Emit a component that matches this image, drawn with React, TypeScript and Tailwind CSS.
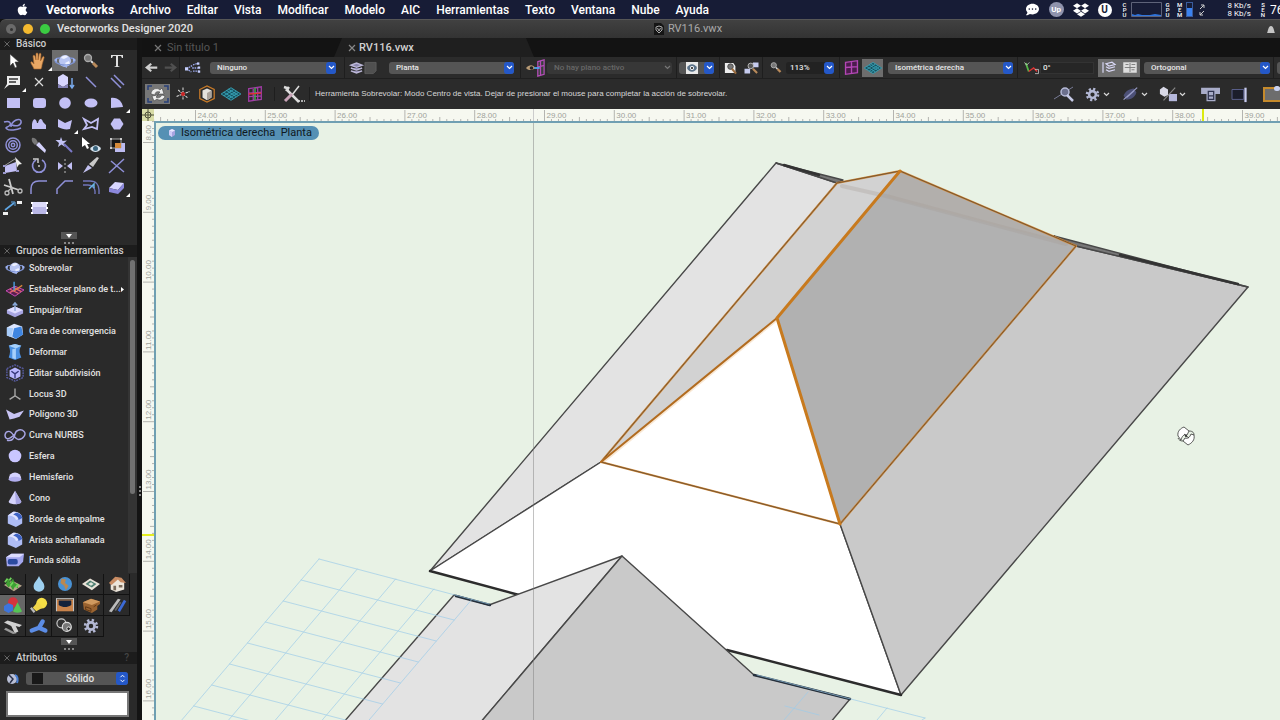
import { Fragment, ReactNode } from 'react';
import clsx from 'clsx';
import { FaApple, FaDropbox, FaCommentDots } from 'react-icons/fa';

const LILAC = '#c3c0f5';
const LINE = '#8f90d8';

interface IconProps {
	children: ReactNode;
	className?: string;
}

/** All the tool icons share the same 24x20 box */
function Icon({ children, className = 'w-6 h-5' }: IconProps) {
	return (
		<svg viewBox="0 0 24 20" className={clsx('block shrink-0', className)} fill="none" aria-hidden="true">
			{children}
		</svg>
	);
}

const flyover = (
	<>
		<circle cx="12" cy="10" r="6" fill="#b9c6f3" />
		<path d="M8 7c2-3 6-3 7-1l-4 2zM12 12l4-2 1 3-3 2z" fill="#eef1ff" />
		<path d="M7 7C2 7 1 10 4 12c4 3 12 3 16 0 3-2 2-5-3-5" stroke="#7e93d2" strokeWidth="1.500" />
		<path d="M1 9l3-2v4zM23 9l-3-2v4zM10 15l4-2v4z" fill="#9fb3ef" />
	</>
);
const hand = (
	<path
		d="M7 18c-1-3-4-6-3-7s2 1 3 2L6 5c0-1 1.600-1 2 0l1 4V3c0-1.500 2-1.500 2 0v6l1.200-6c.3-1.300 2-1 1.800.5L13.500 10l2-4c.6-1.200 2-.5 1.600.8L15 14c0 2-.6 3-1 4z"
		fill="#e9a865"
		stroke="#a8662c"
		strokeWidth=".6"
	/>
);
const magnifier = (
	<>
		<circle cx="9" cy="7" r="3.500" fill="#777" stroke="#aaa" strokeWidth="1.300" />
		<path d="M12 10l2 2" stroke="#ddd" strokeWidth="2" />
		<path d="M14 12l4 4" stroke="#b98a5a" strokeWidth="3" />
	</>
);
const cursorArrow = <path d="M9 3v12l3-3 2 5 2-1-2-5h4z" fill="#fff" stroke="#333" strokeWidth=".6" />;
const cube = (
	<>
		<path d="M6 5l6-3 6 3v9l-6 4-6-4z" fill="#a6a3e0" />
		<path d="M6 5l6-3 6 3-6 3z" fill="#e8e7ff" />
		<path d="M6 5l6 3v10l-6-4z" fill="#cfcdf8" />
	</>
);
const blueGrid = (
	<>
		<path d="M1 10l11-7 11 7-11 7z" fill="#17505f" stroke="#38a5b8" />
		<path d="M4 8l11 7M7 6l11 7M9 4.500l11 7M4 12l11-7M7 14l11-7M9 15.500l11-7" stroke="#38a5b8" />
	</>
);
const magentaGrid = (
	<path d="M5 4l14-2v14L5 18zM12 3v14M5 10l14-1" fill="#4b1c4c" stroke="#b347b5" strokeWidth="1.600" />
);
const gear = (
	<>
		<circle cx="12" cy="10" r="6.500" stroke="#b3b8d4" strokeWidth="3" strokeDasharray="2.550 2.550" />
		<circle cx="12" cy="10" r="4" stroke="#b3b8d4" strokeWidth="3" />
	</>
);
const roundedSolid = (
	<>
		<path d="M4 6l6-4c6 0 10 3 10 7v6l-7 4-9-4z" fill="#aebcf5" />
		<path d="M4 6l6-4c6 0 9 3 10 7l-7 2C12 7 8 6 4 6z" fill="#e0e3ff" />
		<path d="M10 5c4 1 6 4 6 6l4-2c0-3-3-6-7-6z" fill="#3e63c4" />
	</>
);

interface Tool {
	name: string;
	icon: ReactNode;
	more?: boolean;
	active?: boolean;
}

const basicTools: Tool[] = [
	{ name: 'Selección', icon: cursorArrow },
	{ name: 'Desplazar', icon: hand, more: true },
	{ name: 'Sobrevolar', icon: flyover, active: true },
	{ name: 'Zoom', icon: magnifier },
	{ name: 'Texto', icon: <path d="M6 7V4h12v3h-1l-1-2h-3v10l2 1H9l2-1V5H8L7 7z" fill="#e0e0e0" /> },
	{
		name: 'Llamada',
		more: true,
		icon: (
			<>
				<path d="M6 4h13v9H8l-5 4 3-5z" fill="#ededed" />
				<path d="M8 7h9M8 10h7" stroke="#333" strokeWidth="1.400" />
			</>
		),
	},
	{ name: 'Locus', icon: <path d="M8 6l8 8M16 6l-8 8" stroke="#ddd" strokeWidth="1.200" /> },
	{
		name: 'Bloque',
		icon: (
			<>
				<path d="M5 5l5-3 5 3v7l-5 3-5-3z" fill="#d8d6ff" />
				<path d="M5 12l5 3 5-3v4H5z" fill="#8582b8" />
				<path d="M19 6v9M17 13l2 3 2-3" stroke="#79a9ea" strokeWidth="1.500" />
			</>
		),
	},
	{ name: 'Línea', icon: <path d="M7 5l10 10" stroke={LINE} strokeWidth="1.500" /> },
	{ name: 'Línea doble', icon: <path d="M6 6l10 10M9 3l10 10" stroke={LINE} strokeWidth="1.500" /> },
	{ name: 'Rectángulo', icon: <path d="M6 5h13v10H6z" fill={LILAC} /> },
	{ name: 'Rectángulo redondeado', icon: <rect x="6" y="5" width="13" height="10" rx="3" fill={LILAC} /> },
	{ name: 'Círculo', icon: <circle cx="12" cy="10" r="5.800" fill={LILAC} /> },
	{ name: 'Elipse', icon: <ellipse cx="12" cy="10" rx="6.500" ry="4.500" fill={LILAC} /> },
	{ name: 'Arco', icon: <path d="M6 5c7-1 11 4 12 9l-12 1z" fill={LILAC} />, more: true },
	{
		name: 'Mano alzada',
		icon: <path d="M3 8c6-2 8 2 5 4s-4 1-2 3 10 1 14-1M10 13c0-6 9-10 10-6s-4 6-9 4" stroke={LINE} strokeWidth="1.500" />,
	},
	{ name: 'Bézier', icon: <path d="M5 15v-5c1-6 4-6 5-1h1c1-5 4-5 5-1l3 3v4z" fill={LILAC} /> },
	{ name: 'Polilínea', icon: <path d="M5 5l7 4 7-3-2 9c-4 1-8 0-12-2z" fill={LILAC} />, more: true },
	{ name: 'Polígono', icon: <path d="M5 5l7 4 7-4-1 10-5-2-8 2 3-4z" stroke={LILAC} strokeWidth="1.800" /> },
	{ name: 'Polígono regular', icon: <path d="M9 4.500h6l3.500 5.500-3.500 5.500H9L5.500 10z" fill={LILAC} /> },
	{
		name: 'Espiral',
		icon: (
			<>
				<circle cx="12" cy="10" r="7" stroke={LINE} strokeWidth="1.500" />
				<circle cx="12" cy="10" r="4.300" stroke={LINE} strokeWidth="1.500" />
				<circle cx="12" cy="10" r="1.700" stroke={LINE} strokeWidth="1.500" />
			</>
		),
	},
	{
		name: 'Cuentagotas',
		icon: (
			<>
				<path d="M5 3c3-1 5 2 6 5l-3 2C6 8 4 6 5 3z" fill="#777" />
				<path d="M9 10l3-3 7 8-1 3z" fill="#d4d2fb" />
			</>
		),
	},
	{
		name: 'Varita',
		icon: (
			<>
				<path d="M8 2l1.500 4 4.500-.5-3.500 3L12 12 8.500 9.500 5 12l1-4-3.500-3H7z" fill="#c3c3f5" />
				<path d="M11 9l8 8" stroke="#7c7ac9" strokeWidth="2" />
			</>
		),
	},
	{
		name: 'Visibilidad',
		icon: (
			<>
				<path d="M3 2v10l3-2 2 4 2-1-2-4h3z" fill="#fff" />
				<path d="M11 14c3-5 9-5 11 0-3 4-8 4-11 0z" fill="#d6e4ee" />
				<circle cx="16.500" cy="13.500" r="2.500" fill="#3b667f" />
			</>
		),
	},
	{
		name: 'Atributos',
		icon: (
			<>
				<path d="M10 8h10v9H10z" fill="#bdbbf0" />
				<path d="M6 4h10v9H6z" fill="#171717" stroke="#aaa" />
				<path d="M10 8h6v5h-6z" fill="#d58a39" />
				<path d="M5 3h2v2H5zM15 3h2v2h-2zM5 12h2v2H5z" fill="#ccc" />
			</>
		),
	},
	{
		name: 'Deformar 2D',
		icon: (
			<>
				<path d="M4 10l11-4 1 9-12 2z" fill={LILAC} />
				<path d="M3 10l11-7" stroke="#999" />
				<path d="M14 1l7 7-3 .5-2 3z" fill="#eee" />
				<path d="M2 9h3v2H2zM2 16h3v2H2zM15 14h3v2h-3z" fill="#9a98cc" />
			</>
		),
	},
	{
		name: 'Rotar',
		icon: (
			<>
				<path d="M9 4a6.500 6.500 0 1 0 6 0" stroke={LINE} strokeWidth="1.700" />
				<path d="M6 3h5v4M12 9v2" stroke="#ccc" strokeWidth="1.500" />
			</>
		),
	},
	{
		name: 'Simetría',
		icon: (
			<>
				<path d="M5 6l5 4-5 4zM19 6l-5 4 5 4z" fill={LILAC} />
				<path d="M12 3v14" stroke="#bbb" strokeDasharray="2 2" />
			</>
		),
	},
	{
		name: 'Dividir',
		icon: (
			<>
				<path d="M4 17l5-8 4 3z" fill="#c2c1f0" />
				<path d="M10 8l8-7 2 1-6 9z" fill="#c9c9c9" />
			</>
		),
	},
	{ name: 'Conectar', icon: <path d="M4 17L19 3M6 5l13 11" stroke={LINE} strokeWidth="1.500" /> },
	{
		name: 'Recortar',
		icon: (
			<>
				<path d="M3 8l15 5M8 2l4 15" stroke="#ccc" strokeWidth="1.800" />
				<circle cx="6" cy="16" r="2" stroke="#bbb" strokeWidth="1.300" />
				<circle cx="19" cy="14" r="2" stroke="#bbb" strokeWidth="1.300" />
				<path d="M7 14l5-4" stroke="#bbb" strokeWidth="1.500" />
			</>
		),
	},
	{ name: 'Empalme', icon: <path d="M4 17V12c0-5 2-8 8-8h8" stroke={LINE} strokeWidth="1.500" /> },
	{ name: 'Chaflán', icon: <path d="M4 17v-5l8-8h8" stroke={LINE} strokeWidth="1.500" /> },
	{
		name: 'Paralela',
		icon: (
			<>
				<path d="M4 4h7c6 0 9 4 9 9v4M4 8h5c4 0 7 3 7 6v3" stroke="#7176ba" strokeWidth="1.400" />
				<path d="M10 12l5-5v4" stroke="#6bb7e8" strokeWidth="1.400" />
			</>
		),
	},
	{
		name: 'Borrador',
		more: true,
		icon: (
			<>
				<path d="M4 11l6-6 9 1-6 7z" fill="#d9d7ff" />
				<path d="M4 11l9 2 6-7v5l-6 6-9-2z" fill="#8c88dc" />
			</>
		),
	},
	{
		name: 'Cota',
		icon: (
			<>
				<path d="M4 12l9-7" stroke="#5fa6e4" strokeWidth="1.600" />
				<path d="M2 14h5v3H2zM16 3h5v3h-5z" fill="#eee" />
				<path d="M10 4h4v4" stroke="#5fa6e4" />
			</>
		),
	},
	{
		name: 'Símbolo',
		icon: (
			<>
				<path d="M5 4h15v12H5z" fill="#b9b7e6" />
				<path d="M5 4h15v5H5z" fill="#dddcfa" />
				<path d="M4 4h2v2H4zM19 4h2v2h-2zM4 14h2v2H4zM19 14h2v2h-2zM4 9h2v2H4zM19 9h2v2h-2z" fill="#fff" />
			</>
		),
	},
];

const toolGroups: Tool[] = [
	{ name: 'Sobrevolar', icon: flyover },
	{
		name: 'Establecer plano de t...',
		more: true,
		icon: (
			<>
				<path d="M2 12l10-5 10 4-10 7z" fill="#58204e" stroke="#d04ec0" />
				<path d="M6 10l10 5M10 8l9 5M6 14l10-5" stroke="#e2646e" strokeWidth="1.500" />
				<path d="M11 12V2" stroke="#4ba3e8" strokeWidth="1.500" />
				<path d="M11 12l9-6" stroke="#d9863c" strokeWidth="1.500" />
			</>
		),
	},
	{
		name: 'Empujar/tirar',
		icon: (
			<>
				<path d="M3 10l9-4 9 4v4l-9 4-9-4z" fill="#a8a5e2" />
				<path d="M3 10l9-4 9 4-9 4z" fill="#dedcff" />
				<path d="M12 11V3M9.500 5L12 2l2.500 3" stroke="#89a8d8" strokeWidth="1.500" />
			</>
		),
	},
	{
		name: 'Cara de convergencia',
		icon: (
			<>
				<path d="M3 6l8-4 9 3 1 9-8 5-10-4z" fill="#dce6ff" />
				<path d="M11 7l8-2 2 9-8 5-4-3z" fill="#3f86e2" />
				<path d="M3 6l7 1-2 10-5-2z" fill="#a8ccfa" />
			</>
		),
	},
	{
		name: 'Deformar',
		icon: (
			<>
				<path d="M5 3l7-2 7 2c-3 5-2 8 0 13l-7 3-7-3c2-5 2-8 0-13z" fill="#4a90e2" />
				<path d="M5 3l7-2 7 2-6 3zM9 7l4-1v12l-4-1z" fill="#a6d0fb" />
			</>
		),
	},
	{
		name: 'Editar subdivisión',
		icon: (
			<>
				<path d="M3 5l9-4 9 4v10l-9 4-9-4z" stroke="#5b5fa8" strokeWidth="1.500" strokeDasharray="2 1" />
				<path d="M6 7l6-3 6 3v7l-6 3-6-3z" fill="#b9b7ff" />
				<path d="M8 8l4 3 4-3M12 11v5" stroke="#34357a" strokeWidth="1.500" />
			</>
		),
	},
	{ name: 'Locus 3D', icon: <path d="M12 4v8l-6 4M12 12l6 4" stroke="#aaa" strokeWidth="1.500" /> },
	{ name: 'Polígono 3D', icon: <path d="M2 5l9 5 11-4-5 7-6 2-5 1z" fill="#c8c4f4" /> },
	{
		name: 'Curva NURBS',
		icon: (
			<path
				d="M3 16c5 1 8-2 9-7s7-6 10-3-1 9-6 9-6-9-11-9-5 7-2 8 7-3 9-5"
				stroke="#a8a6e4"
				strokeWidth="1.600"
			/>
		),
	},
	{ name: 'Esfera', icon: <circle cx="12" cy="10" r="7" fill="#c9c6ff" /> },
	{
		name: 'Hemisferio',
		icon: (
			<>
				<path d="M5 12a7 7 0 0 1 14 0z" fill="#d4d2ff" />
				<ellipse cx="12" cy="12.500" rx="7" ry="2.800" fill="#b2afef" />
			</>
		),
	},
	{
		name: 'Cono',
		icon: (
			<>
				<path d="M12 2l7 12c0 4-14 4-14 0z" fill="#d5d3fb" />
				<path d="M12 2l7 12c0 2-3 3-6 3z" fill="#a7a4e2" />
			</>
		),
	},
	{ name: 'Borde de empalme', icon: roundedSolid },
	{ name: 'Arista achaflanada', icon: roundedSolid },
	{
		name: 'Funda sólida',
		icon: (
			<>
				<path d="M2 7l6-4h14l-1 9-5 5H3z" fill="#a4a7ef" />
				<path d="M2 7l6-4h14l-5 4z" fill="#dcdcff" />
				<rect x="4" y="9" width="11" height="6" rx="2" fill="#2b4aa0" />
			</>
		),
	},
];

const palettes: Tool[] = [
	{
		name: 'Paisaje',
		icon: (
			<>
				<path d="M2 11l9-5 11 6-9 6z" fill="#b8a58b" />
				<path d="M4 10l3-6 2 5 3-5 2 5 2 1 2 5-4-2-2 4-3-5-2 2z" fill="#3fa033" />
				<path d="M3 8l3-4M9 12l3-4M15 14l3-4M8 6l2-3" stroke="#6fd45a" strokeWidth="2" />
			</>
		),
	},
	{ name: 'Agua', icon: <path d="M12 1c2 5 6 7 6 12a6 5.500 0 0 1-12 0c0-5 4-7 6-12z" fill="#9ed0f0" /> },
	{
		name: 'SIG',
		icon: (
			<>
				<circle cx="12" cy="10" r="7.800" fill="#4a92d4" />
				<path d="M8 4l5 1-1 4 4 3-3 5-2-5-4-3z" fill="#b98851" />
			</>
		),
	},
	{
		name: 'Planos',
		icon: (
			<>
				<path d="M2 10l9-6 11 6-9 7z" fill="#e9e3d8" />
				<path d="M6 10l5-4 7 4-5 4z" fill="#4f7f72" />
				<path d="M9 10l3-2 3 2-3 2z" fill="#dfe6da" />
			</>
		),
	},
	{
		name: 'Edificio',
		icon: (
			<>
				<path d="M5 9l8-6 7 5v8l-9 3-6-3z" fill="#ece5da" />
				<path d="M3 9l7-7 7 1 5 6-6-1-3-3-7 6z" fill="#c98c63" />
				<path d="M8 12h3v5H8zM14 11h4v3h-4z" fill="#7a6a5a" />
			</>
		),
	},
	{
		name: 'Modelado 3D',
		active: true,
		icon: (
			<>
				<circle cx="12" cy="7" r="5.500" fill="#d3343e" />
				<path d="M2 11l5-3 5 2v6l-5 3-5-3z" fill="#3d75dd" />
				<path d="M17 7l5 10c-1 2-9 2-10 0z" fill="#55c455" />
			</>
		),
	},
	{
		name: 'Iluminación',
		icon: (
			<>
				<circle cx="15" cy="8" r="6" fill="#f6df45" />
				<path d="M11 6l5 7-7 4-4-4z" fill="#f0d64a" />
				<path d="M3 13l4 5" stroke="#bbb" strokeWidth="2.500" />
			</>
		),
	},
	{
		name: 'Escenario',
		icon: (
			<>
				<path d="M3 4h18v13H3z" fill="#c9834b" />
				<path d="M5 5h14v5c-5 3-9 3-14 0z" fill="#15223b" />
				<path d="M2 3h20M2.500 3v14M21.500 3v14" stroke="#ddd" />
			</>
		),
	},
	{
		name: 'Mobiliario',
		icon: (
			<>
				<path d="M3 7l9-4 10 3v3l-3 2v4l-6 4-9-4z" fill="#9a6330" />
				<path d="M3 7l9-4 10 3-9 4z" fill="#d19a5f" />
				<path d="M6 12l6 2v3l-6-2zM15 12l3-2" stroke="#5c3614" />
			</>
		),
	},
	{
		name: 'Máquinas',
		icon: (
			<>
				<path d="M3 17L13 3l3 1L6 18z" fill="#bcbcbc" />
				<path d="M14 17l7-12" stroke="#3c6ad6" strokeWidth="3" />
				<path d="M10 16l6-9" stroke="#666" strokeWidth="2" />
			</>
		),
	},
	{
		name: 'Estructura',
		icon: (
			<>
				<path d="M2 6l4-2 16 5-3 2-4-1 3 6-4 2-4-8z" fill="#d0d0d0" />
				<path d="M4 12l12 6-4 1L2 14z" fill="#9a9a9a" />
			</>
		),
	},
	{
		name: 'Tuberías',
		icon: <path d="M4 15l8-3 4-7M12 12l7 3" stroke="#5c8de6" strokeWidth="5" strokeLinecap="round" />,
	},
	{
		name: 'Fijaciones',
		icon: (
			<>
				<circle cx="8" cy="7" r="5" fill="#333" stroke="#ccc" strokeWidth="1.300" />
				<circle cx="14" cy="11" r="5" fill="#777" stroke="#ddd" strokeWidth="1.300" />
				<circle cx="16" cy="13" r="2" fill="#222" stroke="#eee" />
			</>
		),
	},
	{ name: 'Engranajes', icon: gear },
];

function Chevron({ className = 'w-[7px] h-[5px]' }: { className?: string }) {
	return (
		<svg viewBox="0 0 7 5" className={className} fill="none" aria-hidden="true">
			<path d="M1 1l2.500 2.500L6 1" stroke="currentColor" strokeWidth="1.200" />
		</svg>
	);
}

interface PopupProps {
	label: string;
	value: string;
	className?: string;
	disabled?: boolean;
}

/** Rounded pop-up menu with the blue arrow cap on its right */
function Popup({ label, value, className, disabled }: PopupProps) {
	return (
		<div className={clsx('relative flex h-[12px] shrink-0', className)}>
			<select
				aria-label={label}
				disabled={disabled}
				className={clsx(
					'w-full appearance-none rounded-[3px] pl-[7px] pr-3 text-[8px] leading-[12px] font-medium',
					disabled ? 'bg-[#373737] text-[#686868]' : 'bg-[#555] text-[#e6e6e6]'
				)}
			>
				<option>{value}</option>
			</select>
			<span
				className={clsx(
					'pointer-events-none absolute inset-y-0 right-0 flex w-[10px] items-center justify-center rounded-[3px]',
					disabled ? 'text-[#777]' : 'bg-[#2458c8] text-white'
				)}
			>
				<Chevron />
			</span>
		</div>
	);
}

function Divider({ className }: { className?: string }) {
	return <span className={clsx('w-px shrink-0 self-stretch bg-[#1e1e1e]', className)} />;
}

interface ToolButtonProps {
	label: string;
	children: ReactNode;
	className?: string;
	icon?: string;
}

function ToolButton({ label, children, className, icon = 'w-5 h-4' }: ToolButtonProps) {
	return (
		<button aria-label={label} className={clsx('flex shrink-0 items-center justify-center', className)}>
			<Icon className={icon}>{children}</Icon>
		</button>
	);
}

function PanelTitle({ children, help }: { children: ReactNode; help?: boolean }) {
	return (
		<h2 className="flex h-3 items-center bg-[#1c1c1c] pl-1 text-[10px] leading-3 font-medium text-[#ccc]">
			<button aria-label="Cerrar panel" className="w-3 text-left text-[#666]">
				<svg viewBox="0 0 6 6" className="h-[6px] w-[6px]" aria-hidden="true">
					<path d="M.5.5l5 5M5.500.5l-5 5" stroke="currentColor" />
				</svg>
			</button>
			{children}
			{help && <button aria-label="Ayuda" className="mr-2 ml-auto text-[#444]">?</button>}
		</h2>
	);
}

function Expander() {
	return (
		<div className="flex flex-col items-center">
			<button aria-label="Mostrar más" className="flex h-[7px] w-4 items-center justify-center bg-[#555]">
				<svg viewBox="0 0 6 4" className="h-1 w-[6px]" aria-hidden="true">
					<path d="M0 0h6L3 4z" fill="#fff" />
				</svg>
			</button>
			<span className="mt-[3px] flex gap-[2px]">
				<i className="h-[2px] w-[2px] bg-[#888]" />
				<i className="h-[2px] w-[2px] bg-[#888]" />
				<i className="h-[2px] w-[2px] bg-[#888]" />
			</span>
		</div>
	);
}

const menus = ['Archivo', 'Editar', 'Vista', 'Modificar', 'Modelo', 'AIC', 'Herramientas', 'Texto', 'Ventana', 'Nube', 'Ayuda'];

function Stacked({ text }: { text: string }) {
	return (
		<span className="flex w-[6px] flex-col items-center text-[6px] leading-[5px] font-medium">
			{text.split('').map((letter, i) => (
				<span key={i}>{letter}</span>
			))}
		</span>
	);
}

function MenuBar() {
	return (
		<header className="flex h-[19px] shrink-0 items-center overflow-hidden bg-[#171c36] pl-4 text-white">
			<FaApple className="mr-[17px] h-[13px] w-[13px]" />
			<nav className="flex items-center gap-4 text-[12px] leading-4 font-medium whitespace-nowrap">
				<a href="#vectorworks" className="font-bold">Vectorworks</a>
				{menus.map((menu) => (
					<a key={menu} href={`#${menu}`}>{menu}</a>
				))}
			</nav>
			<div className="ml-auto flex shrink-0 items-center">
				<FaCommentDots className="mr-[10px] h-[13px] w-[13px]" />
				<span className="mr-[9px] flex h-[15px] w-[15px] items-center justify-center rounded-full bg-[#8f93ad] text-[8px] font-bold">Up</span>
				<FaDropbox className="mr-[9px] h-4 w-4" />
				<span className="mr-[10px] flex h-[14px] w-[14px] items-center justify-center rounded-full bg-white text-[10px] font-bold text-[#171c36]">U</span>
				<Stacked text="CPU" />
				<svg viewBox="0 0 31 15" className="mx-[3px] h-[15px] w-[31px]" aria-hidden="true">
					<path d="M.5.5h30v14H.5z" fill="none" stroke="#5e6379" />
					<path d="M1 14v-2l3 1 3-1 4 1h8l5-1 6 1v1z" fill="#2f74dc" />
				</svg>
				<Stacked text="GPU" />
				<span className="w-[6px]" />
				<Stacked text="MEM" />
				<span className="mr-[6px] ml-[3px] flex h-[15px] w-[7px] items-end border border-[#3a5b9b]">
					<i className="h-[8px] w-full bg-[#3b82f0]" />
				</span>
				<svg viewBox="0 0 6 12" className="mr-[23px] h-3 w-[6px]" fill="none" stroke="#ccc" aria-hidden="true">
					<path d="M1 5l4-4M2 1h3v3M5 7l-4 4M1 8v3h3" />
				</svg>
				<span className="mr-[9px] flex flex-col text-[8px] leading-[8px]">
					<span>8 Kb/s</span>
					<span>8 Kb/s</span>
				</span>
				<Stacked text="SEN" />
				<span className="ml-1 w-[10px] overflow-hidden text-[12px] leading-4">76</span>
			</div>
		</header>
	);
}

function TitleBar() {
	return (
		<div className="flex h-[19px] shrink-0 items-center rounded-tl-md border-t border-[#565656] bg-linear-to-b from-[#414141] to-[#333] px-[6px] text-[11px] leading-4">
			<div className="flex flex-1 items-center">
				<button aria-label="Cerrar" className="mr-[7px] flex h-[10px] w-[10px] items-center justify-center rounded-full bg-[#6a6a6a]">
					<i className="h-[3px] w-[3px] rounded-full bg-[#333]" />
				</button>
				<button aria-label="Minimizar" className="mr-[7px] h-[10px] w-[10px] rounded-full bg-[#f4b92f]" />
				<button aria-label="Ampliar" className="mr-[7px] h-[10px] w-[10px] rounded-full bg-[#3bcb42]" />
				<span className="font-medium whitespace-nowrap text-[#e2e2e2]">Vectorworks Designer 2020</span>
			</div>
			<div className="flex items-center gap-[4px] pl-24 text-[#aaa]">
				<svg viewBox="0 0 10 12" className="h-3 w-[10px]" aria-hidden="true">
					<path d="M0 0h7l3 3v9H0z" fill="#151515" />
					<path d="M2 4l3-1 3 1v3L5 10 2 7zM3.500 5L5 8l1.500-3" fill="none" stroke="#aaa" />
				</svg>
				RV116.vwx
			</div>
			<div className="flex flex-1 justify-end">
				<svg viewBox="0 0 8 9" className="mr-[-1px] h-[9px] w-2" aria-label="Avisos">
					<path d="M0 8c1-1 1-7 4-7s3 6 4 7z" fill="#c5c5c5" />
				</svg>
			</div>
		</div>
	);
}

function Sidebar() {
	return (
		<aside className="flex w-[137px] shrink-0 flex-col overflow-hidden bg-[#2a2a2a] text-[#e2e2e2]">
			<PanelTitle>Básico</PanelTitle>
			<div className="mb-[14px] grid h-[168px] shrink-0 grid-cols-[repeat(5,26px)] auto-rows-[21px]">
				{basicTools.map((tool) => (
					<button
						key={tool.name}
						aria-label={tool.name}
						className={clsx('relative flex items-center justify-center', tool.active && 'bg-[#6d6d6d]')}
					>
						<Icon>{tool.icon}</Icon>
						{tool.more && (
							<svg viewBox="0 0 4 4" className="absolute right-0 bottom-0 h-1 w-1" aria-hidden="true">
								<path d="M4 0v4H0z" fill="#fff" />
							</svg>
						)}
					</button>
				))}
			</div>
			<Expander />
			<div className="mt-[1px] shrink-0">
				<PanelTitle>Grupos de herramientas</PanelTitle>
			</div>
			<div className="flex h-[316px] shrink-0">
				<ul className="flex h-[314px] min-w-0 flex-1 flex-col pt-px">
					{toolGroups.map((tool) => (
						<li key={tool.name} className="flex-1">
							<button className="flex h-full w-full items-center pl-1 text-[9px] leading-3 font-medium whitespace-nowrap">
								<Icon className="mr-[3px] h-[18px] w-[22px]">{tool.icon}</Icon>
								{tool.name}
								{tool.more && (
									<svg viewBox="0 0 3 5" className="ml-auto mr-1 h-[5px] w-[3px]" aria-hidden="true">
										<path d="M0 0l3 2.500L0 5z" fill="#fff" />
									</svg>
								)}
							</button>
						</li>
					))}
				</ul>
				<div className="flex w-[9px] shrink-0 justify-center bg-[#343434] pt-[3px]">
					<i className="h-[234px] w-[5px] rounded-full bg-[#717171]" />
				</div>
			</div>
			<div className="mt-px mb-[1px] grid shrink-0 grid-cols-[repeat(5,26px)] auto-rows-[21px]">
				{palettes.map((tool) => (
					<button
						key={tool.name}
						aria-label={tool.name}
						className={clsx(
							'flex items-center justify-center border-r border-b border-[#121212]',
							tool.active && 'bg-[#666]'
						)}
					>
						<Icon className="h-[18px] w-[22px]">{tool.icon}</Icon>
					</button>
				))}
			</div>
			<Expander />
			<div className="mt-[2px] shrink-0">
				<PanelTitle help>Atributos</PanelTitle>
			</div>
			<div className="mt-2 flex h-[13px] shrink-0 items-center pl-[6px]">
				<svg viewBox="0 0 14 12" className="mr-[6px] h-3 w-[14px]" aria-hidden="true">
					<circle cx="6" cy="6" r="5" fill="#b9bfd6" />
					<path d="M3 2l4 4-3 4" stroke="#29304a" strokeWidth="1.500" fill="none" />
					<path d="M9 2c3 1 3 5 2 8" stroke="#4a7fd4" strokeWidth="2" fill="none" />
				</svg>
				<div className="relative flex h-[13px] w-[102px] items-center">
					<select
						aria-label="Relleno"
						className="h-full w-full appearance-none rounded-[3px] bg-[#555] pl-10 text-[10px] leading-[13px] font-medium"
					>
						<option>Sólido</option>
					</select>
					<i className="pointer-events-none absolute left-[6px] h-[11px] w-[11px] bg-[#181818]" />
					<span className="pointer-events-none absolute right-0 flex h-[13px] w-3 flex-col items-center justify-center rounded-[3px] bg-[#2458c8] text-white">
						<Chevron className="h-[4px] w-[7px] rotate-180" />
						<Chevron className="mt-px h-[4px] w-[7px]" />
					</span>
				</div>
			</div>
			<button aria-label="Color de relleno" className="ml-[6px] mt-[6px] mr-[8px] h-[26px] shrink-0 border-2 border-[#777] bg-white" />
		</aside>
	);
}

function Tabs() {
	return (
		<div className="flex h-[19px] shrink-0 bg-[#131313] pl-[12px] text-[11px] leading-4" role="tablist">
			<button role="tab" aria-selected="false" className="flex w-[180px] items-center gap-[5px] text-[#565656]">
				<svg viewBox="0 0 8 8" className="h-2 w-2" aria-hidden="true">
					<path d="M1 1l6 6M7 1L1 7" stroke="#777" strokeWidth="1.200" />
				</svg>
				Sin título 1
			</button>
			<button
				role="tab"
				aria-selected="true"
				className="flex w-[200px] items-center gap-[3px] bg-[#1f1f1f] pl-[14px] font-medium text-[#d2d2d2] [clip-path:polygon(8px_0,192px_0,100%_100%,0_100%)]"
			>
				<svg viewBox="0 0 8 8" className="h-2 w-2" aria-hidden="true">
					<path d="M1 1l6 6M7 1L1 7" stroke="#888" strokeWidth="1.200" />
				</svg>
				RV116.vwx
			</button>
		</div>
	);
}

function ViewBar() {
	return (
		<div className="flex h-[22px] shrink-0 items-center overflow-hidden border-b border-[#1f1f1f] bg-[#2b2b2b]">
			<ToolButton label="Anterior" className="ml-[1px] w-[18px]" icon="w-[18px] h-[15px]">
				<path d="M19 10H7M11 5l-6 5 6 5" stroke="#d0d0d0" strokeWidth="3" />
			</ToolButton>
			<ToolButton label="Siguiente" className="w-[18px]" icon="w-[18px] h-[15px]">
				<path d="M5 10h12M13 5l6 5-6 5" stroke="#505050" strokeWidth="3" />
			</ToolButton>
			<Divider />
			<ToolButton label="Clases" className="mx-[3px] w-5">
				<path d="M4 11l7-4M4 11l6 4M12 6l7-2M12 14l8 0M11 10h7" stroke="#9aa7ea" strokeDasharray="2 1" strokeWidth="1.600" />
				<path d="M2 9h4v4H2zM17 3h3v3h-3zM18 8h3v3h-3zM18 13h3v3h-3z" fill="#c6d0ff" />
			</ToolButton>
			<Popup label="Clase activa" value="Ninguno" className="ml-1 w-[126px]" />
			<Divider className="ml-[8px]" />
			<ToolButton label="Capas" className="ml-1 w-[14px]" icon="w-[17px] h-[14px]">
				<path d="M4 6l8-3 8 3-8 3zM4 10l8 3 8-3M4 14l8 3 8-3" stroke="#bdb9d8" strokeWidth="2" fill="#8985ad" />
			</ToolButton>
			<ToolButton label="Hoja" className="mr-3 w-[14px]" icon="w-[17px] h-[14px]">
				<path d="M4 2h16v12l-4 4H4z" fill="#505050" stroke="#666" />
			</ToolButton>
			<Popup label="Capa activa" value="Planta" className="w-[125px]" />
			<Divider className="ml-[6px]" />
			<ToolButton label="Plano de trabajo" className="ml-1 w-[21px]" icon="w-[22px] h-[18px]">
				<path d="M1 10c3-4 8-4 10 0-3 3-8 3-10 0z" fill="#b79a75" />
				<circle cx="7" cy="10" r="2" fill="#222" />
				<path d="M14 3l7-2v16l-7 2zM14 9l7-2M17 2v16" stroke="#b44db8" strokeWidth="1.400" fill="#39403b" />
				<path d="M10 10h6" stroke="#4ea3f0" strokeWidth="2" />
			</ToolButton>
			<Popup label="Plano activo" value="No hay plano activo" className="ml-[1px] w-[125px]" disabled />
			<Divider className="ml-1" />
			<div className="relative ml-[2px] flex h-3 w-[35px] shrink-0">
				<select aria-label="Opciones de vista" className="w-full appearance-none rounded-[3px] bg-[#555] text-[8px]" />
				<span className="pointer-events-none absolute top-0 left-[7px] flex h-3 w-3 items-center justify-center bg-[#e9e9e9]">
					<svg viewBox="0 0 10 8" className="h-2 w-[10px]" aria-hidden="true">
						<path d="M0 4c2-5 8-5 10 0-2 5-8 5-10 0z" fill="#5b7289" />
						<circle cx="5" cy="4" r="2" fill="#fff" />
						<circle cx="5" cy="4" r="1" fill="#111" />
					</svg>
				</span>
				<span className="pointer-events-none absolute inset-y-0 right-0 flex w-[10px] items-center justify-center rounded-[3px] bg-[#2458c8] text-white">
					<Chevron />
				</span>
			</div>
			<Divider className="ml-[5px]" />
			<ToolButton label="Ajustar a página" className="ml-[1px] w-[18px]" icon="w-[17px] h-[14px]">
				<path d="M4 3h12l3 4v10H4z" fill="#eee" />
				<circle cx="12" cy="8" r="4" fill="#777" stroke="#333" />
				<path d="M14 11l6 7" stroke="#9a6b3e" strokeWidth="3" />
			</ToolButton>
			<ToolButton label="Ajustar a objetos" className="ml-[3px] w-[18px]" icon="w-[17px] h-[14px]">
				<path d="M2 11h8v7H2zM14 2h8v7h-8z" fill="#c6cbee" />
				<circle cx="11" cy="7" r="4" fill="#555" stroke="#ddd" />
				<path d="M14 11l6 6" stroke="#b98a5a" strokeWidth="3" />
			</ToolButton>
			<Divider className="ml-[2px]" />
			<ToolButton label="Zoom" className="ml-[3px] w-5" icon="w-[18px] h-[15px]">
				{magnifier}
			</ToolButton>
			<Popup label="Escala de zoom" value="113%" className="w-[48px] [&>select]:bg-[#222] [&>select]:pl-1" />
			<Divider className="ml-[5px]" />
			<ToolButton label="Vista unificada" className="ml-[1px] w-5" icon="w-[21px] h-[17px]">
				{magentaGrid}
			</ToolButton>
			<ToolButton label="Plano de capa" className="ml-[1px] h-[18px] w-[21px] bg-[#6d6d6d]">
				{blueGrid}
			</ToolButton>
			<Popup label="Vista" value="Isométrica derecha" className="ml-[5px] w-[125px]" />
			<Divider className="ml-[4px]" />
			<ToolButton label="Rotar vista" className="ml-1 w-[18px]" icon="w-[17px] h-[14px]">
				<path d="M4 3l4 12" stroke="#54b848" strokeWidth="2.500" />
				<path d="M8 15l7-5 5 5" stroke="#d33" strokeWidth="2" />
				<path d="M2 2l3 4 4-4M17 12h5v6h-5" stroke="#ddd" />
			</ToolButton>
			<input
				aria-label="Ángulo de rotación"
				defaultValue="0°"
				className="h-3 w-[54px] shrink-0 border border-[#333] bg-[#262626] pl-[2px] text-[8px] font-medium text-[#e6e6e6]"
			/>
			<div className="mr-[4px] ml-[4px] flex h-[18px] shrink-0 bg-[#6d6d6d]">
				<ToolButton label="Capas múltiples" className="w-[21px]" icon="w-[18px] h-[15px]">
					<path d="M4 3v14M8 5l8-2 4 3-8 2zM8 9l4 2 8-2M8 13l4 2 8-2" stroke="#d9d8f5" strokeWidth="1.600" />
				</ToolButton>
				<ToolButton label="Ventanas múltiples" className="w-[21px]" icon="w-[18px] h-[15px]">
					<path d="M3 3h18v14H3z" fill="#ddd" />
					<path d="M12 4v12M5 10h14M6 6h4M14 6h5M14 13h4" stroke="#777" strokeWidth="1.200" />
				</ToolButton>
			</div>
			<Popup label="Proyección" value="Ortogonal" className="w-[126px]" />
			<Divider className="ml-[3px]" />
			<Popup label="Modo de representación" value="" className="ml-[3px] w-[125px]" />
		</div>
	);
}

function ModeBar() {
	return (
		<div className="flex h-[30px] shrink-0 items-center overflow-hidden bg-[#2b2b2b] pl-[3px] text-[#d8d8d8]">
			<ToolButton label="Centro de vista" className="h-5 w-[25px] bg-[#777]" icon="w-6 h-5">
				<path d="M2 6V2h4M18 2h4v4M22 14v4h-4M6 18H2v-4" stroke="#29407a" strokeWidth="1.500" />
				<path d="M5 10c0-5 6-7 9-4l2-2 2 6h-6l2-2c-3-1-5 0-5 3zM8 17l-2-5 6-1-2 2c2 2 5 0 6-2l3 1c-1 4-6 5-8 3z" fill="#eee" stroke="#333" strokeWidth=".5" />
			</ToolButton>
			<ToolButton label="Centro de objeto" className="ml-[1px] w-6">
				<path d="M12 2v16M4 13l16-6M6 5l12 10" stroke="#ddd" strokeWidth="1.300" strokeDasharray="3 1" />
				<circle cx="12" cy="10" r="2.500" fill="#c22" />
			</ToolButton>
			<ToolButton label="Interactivo" className="w-6" icon="w-[22px] h-[18px]">
				<path d="M4 5l8-4 8 4v10l-8 4-8-4z" fill="#2b2b2b" stroke="#c87a28" strokeWidth="1.400" />
				<path d="M7 6l5-2 5 2v8l-5 3-5-3z" fill="#e4e1dd" />
				<path d="M12 9l5-3v8l-5 3z" fill="#aaa29b" />
			</ToolButton>
			<ToolButton label="Plano de capa" className="w-6" icon="w-[22px] h-[18px]">
				{blueGrid}
			</ToolButton>
			<ToolButton label="Plano de trabajo" className="w-6" icon="w-[22px] h-[18px]">
				<path d="M5 4l14-2v14L5 18zM10 3v14M15 3v13M5 9l14-1M5 13l14-1" stroke="#a33ca8" strokeWidth="1.400" />
				<path d="M12 3v14" stroke="#3fae49" strokeWidth="1.600" />
				<path d="M5 10l14-1" stroke="#d33" strokeWidth="1.600" />
			</ToolButton>
			<Divider className="mx-[7px] my-2" />
			<ToolButton label="Preferencias" className="w-[22px]" icon="w-6 h-5">
				<path d="M3 3l3 1 1 3 11 11M8 3L5 7" stroke="#ddd" strokeWidth="2.500" />
				<path d="M18 2l-7 9" stroke="#ddd" strokeWidth="1.500" />
				<path d="M11 10l-7 7" stroke="#c9a3b8" strokeWidth="3" />
				<path d="M17 17h2M20 17h2M23 17h1" stroke="#ddd" strokeWidth="1.500" />
			</ToolButton>
			<Divider className="mx-[5px] my-2" />
			<p className="font-['Liberation_Sans'] text-[8px] leading-3 whitespace-nowrap">
				Herramienta Sobrevolar: Modo Centro de vista. Dejar de presionar el mouse para completar la acción de sobrevolar.
			</p>
			<div className="ml-auto flex shrink-0 items-center">
				<ToolButton label="Buscar" className="mr-[7px] w-6" icon="w-6 h-5">
					<path d="M2 15L21 3" stroke="#777a95" />
					<circle cx="13" cy="8" r="4" fill="#6c708d" stroke="#b7bbd8" strokeWidth="1.500" />
					<path d="M15 11l6 6" stroke="#c6cae6" strokeWidth="2.500" />
				</ToolButton>
				<ToolButton label="Ajustes" className="w-[18px]" icon="w-[21px] h-[17px]">{gear}</ToolButton>
				<Chevron className="ml-[2px] mr-[11px] h-[5px] w-[7px]" />
				<ToolButton label="Visualización" className="w-[18px]">
					<path d="M4 12c2-6 7-8 13-9l3 5c-2 6-7 9-13 9z" fill="#4c5076" />
					<path d="M4 17L21 2M8 14l9-8" stroke="#9a9ec8" strokeWidth="1.500" />
				</ToolButton>
				<Chevron className="ml-[2px] mr-[11px] h-[5px] w-[7px]" />
				<ToolButton label="Representación" className="w-[18px]" icon="w-[22px] h-[18px]">
					<path d="M3 5l4-3 5 3v6l-4 2-5-3z" fill="#d8d8e6" />
					<path d="M13 10h9v8h-9z" fill="#b5b8dc" />
					<path d="M7 17L20 3" stroke="#888" strokeWidth="1.300" />
				</ToolButton>
				<Chevron className="ml-[2px] mr-4 h-[5px] w-[7px]" />
				<ToolButton label="Recorte" className="mr-3 w-[18px]" icon="w-[22px] h-[18px]">
					<path d="M1 3h21v7H1zM7 10h10v8H7z" fill="#a9adc9" />
					<path d="M9 7h6v5H9zM9 12v4h6v-4" stroke="#30344f" strokeWidth="1.400" />
				</ToolButton>
				<ToolButton label="Panel lateral" className="mr-[13px] w-[18px]" icon="w-[22px] h-[18px]">
					<path d="M2 5h13v11H2z" fill="#1b1d2b" stroke="#5f6594" />
					<path d="M17 3v16" stroke="#c8ccf0" strokeWidth="2.500" />
				</ToolButton>
				<button aria-label="Editar ventana" className="h-[15px] w-[17px] border-2 border-r-0 border-[#c58a2c] bg-[#6d6d6d]">
					<i className="-mt-2 ml-[9px] block h-[5px] w-[6px] rounded-full bg-[#c9d2f2]" />
				</button>
			</div>
		</div>
	);
}

const UNIT = 69.8;
const SUBDIVISIONS = Array.from({ length: 10 }, (_, i) => i);

function tickLength(i: number) {
	if (i === 0) return 11;
	return i === 5 ? 4 : 2;
}

function HorizontalRuler() {
	return (
		<svg className="block h-[12px] min-w-0 flex-1 bg-[#f6f8f0]" aria-label="Regla horizontal">
			{Array.from({ length: 32 }, (_, n) => {
				const x = 41.500 + (n - 1) * UNIT;
				return (
					<Fragment key={n}>
						{SUBDIVISIONS.map((i) => (
							<path key={i} d={`M${x + (i * UNIT) / 10} 12v-${tickLength(i)}`} stroke="#b4b4b0" />
						))}
						{n > 0 && (
							<text x={x + 2} y="9" fontSize="8" fill="#a0a29b" className="font-['Liberation_Sans']">
								{(n + 23).toFixed(2)}
							</text>
						)}
					</Fragment>
				);
			})}
			<path d="M379.500 0v12" stroke="#ccc" />
			<path d="M1049 0v12" stroke="#dcea10" strokeWidth="2" />
		</svg>
	);
}

function VerticalRuler() {
	return (
		<svg className="block w-[12px] shrink-0 bg-[#f6f8f0]" aria-label="Regla vertical">
			{Array.from({ length: 24 }, (_, n) => {
				const y = 21.500 + (n - 1) * UNIT;
				return (
					<Fragment key={n}>
						{SUBDIVISIONS.map((i) => (
							<path key={i} d={`M12 ${y + (i * UNIT) / 10}h-${tickLength(i)}`} stroke="#b4b4b0" />
						))}
						{n > 0 && (
							<text transform={`translate(9 ${y - 2}) rotate(-90)`} fontSize="8" fill="#a0a29b" className="font-['Liberation_Sans']">
								{(n + 7).toFixed(2)}
							</text>
						)}
					</Fragment>
				);
			})}
			<path d="M0 414h12" stroke="#e4ee20" strokeWidth="2" />
		</svg>
	);
}

/** Ground grid: rows step down-left, columns run along the eave direction */
function GroundGrid() {
	const rows = Array.from({ length: 8 }, (_, i) => i + 1);
	const columns = Array.from({ length: 5 }, (_, i) => i);
	return (
		<g stroke="#9ccbea" strokeWidth=".8" fill="none" opacity=".85">
			{rows.map((r) => (
				<path key={r} d={`M${319 - r * 17.900} ${559 + r * 21}l153 40`} />
			))}
			{columns.map((c) => (
				<path key={c} d={`M${319 + c * 38.300} ${559 + c * 10}l-150 176`} />
			))}
			<path d="M319 559l170 45M757 675l168 43M808 692l-24 28M887 708l-10 12M785 706l34 9M925 718l-3 2" />
		</g>
	);
}

function Roof() {
	return (
		<svg
			viewBox="156 123 1124 597"
			preserveAspectRatio="xMinYMin slice"
			className="block h-full w-full"
			role="img"
			aria-label="Modelo de cubierta"
			strokeLinejoin="round"
			strokeLinecap="round"
		>
			<g stroke="#484848" strokeWidth="1.400">
				<path d="M776 163L430 571l171-109 236-279z" fill="#e3e3e3" />
				<path d="M430 571l171-109 239 62 61 171z" fill="#fff" stroke="none" />
				<path d="M430 571l171-109M840 524l61 171" fill="none" />
				<path d="M1076 246l172 41-347 408-61-171z" fill="#c9c9c9" />
				<path d="M776 163l67 17-6 3zM1054 236l194 51-172-41z" fill="#777" />
			</g>
			<path d="M784 165l35 10M1120 255l118 29" stroke="#333" strokeWidth="2.500" />
			<path d="M837 183l63-12-123 147-176 144z" fill="#d2d2d2" />
			<path d="M900 171l176 75-236 278-63-206z" fill="#b1b1b1" />
			<path d="M777 318l63 206-239-62z" fill="#fff" />
			<path d="M900 171l176 75-189-49z" fill="#b5ada2" opacity=".35" />
			<path d="M842 186l44 10 180 48" fill="none" stroke="#a49c94" strokeWidth="4" opacity=".3" />
			<path d="M775 321L604 461" stroke="#f6d9b8" strokeWidth="3" opacity=".6" />
			<g fill="none" stroke="#a9713a" strokeWidth="2">
				<path d="M837 183L601 462l239 62 236-278-176-75z" stroke="#d08a3c" />
				<path d="M837 183L601 462l239 62 236-278-176-75-63 12" stroke="#775632" strokeWidth="1" />
				<path d="M777 318L601 462" stroke="#b26c20" />
				<path d="M900 171L777 318l63 206" stroke="#c87a1e" strokeWidth="3" />
			</g>
			<path d="M519 594l-30 11-35-9 20 30h100zM728 650l26 25 96 24 51-4z" fill="#e8f2e5" />
			<path d="M430 571l89 24M727 650l174 45" stroke="#2c2c2c" strokeWidth="2.500" />
			<g stroke="#484848" strokeWidth="1.400">
				<path d="M454 595l35 10 133-49-142 167H343z" fill="#e3e3e3" />
				<path d="M622 556l132 119 96 24-20 24H480z" fill="#c9c9c9" />
			</g>
			<path d="M456 596l34 9M754 675l96 24" stroke="#26303c" strokeWidth="2.400" />
			<GroundGrid />
			<path d="M533.500 123v597" stroke="#777" strokeOpacity=".45" strokeWidth="1" />
		</svg>
	);
}

function Drawing() {
	return (
		<div className="flex min-h-0 flex-1 flex-col">
			<div className="flex shrink-0">
				<svg viewBox="0 0 12 12" className="h-3 w-3 bg-[#d9dda8]" aria-hidden="true">
					<circle cx="6" cy="6" r="3" fill="none" stroke="#50523a" />
					<path d="M6 0v12M0 6h12" stroke="#50523a" />
				</svg>
				<HorizontalRuler />
			</div>
			<div className="flex min-h-0 flex-1">
				<VerticalRuler />
				<main className="relative min-w-0 flex-1 border-t-2 border-l-2 border-[#6f9fb2] bg-[#e8f2e5]">
					<Roof />
					<div className="absolute top-[3px] left-[2px] flex h-[14px] items-center rounded-full bg-[#5590b4] pr-[7px] pl-2 text-[11px] leading-[14px] whitespace-pre text-[#101820]">
						<Icon className="mr-[3px] h-[10px] w-3">{cube}</Icon>
						{'Isométrica derecha  Planta'}
					</div>
					<svg viewBox="0 0 20 20" className="absolute top-[303px] left-[1020px] h-5 w-5" fill="none" aria-hidden="true">
						<path d="M2 10C1 5 5 2 8 1l5 4-2 4c-3-1-5 1-6 5z" fill="#fff" stroke="#333" strokeWidth=".8" />
						<path d="M18 9c1 5-2 8-6 10l-5-4 2-3c3 1 5-1 6-4z" fill="#fff" stroke="#333" strokeWidth=".8" />
						<path d="M13 5c4 0 5 2 5 4M7 15c-3 0-4-1-5-3M8 8l5 4" stroke="#333" strokeWidth=".8" />
						<circle cx="10" cy="10" r="1" fill="#222" />
					</svg>
				</main>
			</div>
		</div>
	);
}

export default function App() {
	return (
		<div className="flex h-screen flex-col overflow-hidden bg-[#141414] font-['Roboto','Liberation_Sans',sans-serif]">
			<MenuBar />
			<TitleBar />
			<div className="flex min-h-0 flex-1">
				<Sidebar />
				<div className="flex w-[5px] shrink-0 flex-col items-center gap-[2px] pt-[448px]">
					<i className="h-[2px] w-[2px] bg-[#888]" />
					<i className="h-[2px] w-[2px] bg-[#888]" />
					<i className="h-[2px] w-[2px] bg-[#888]" />
				</div>
				<div className="flex min-w-0 flex-1 flex-col">
					<Tabs />
					<ViewBar />
					<ModeBar />
					<Drawing />
				</div>
			</div>
		</div>
	);
}
